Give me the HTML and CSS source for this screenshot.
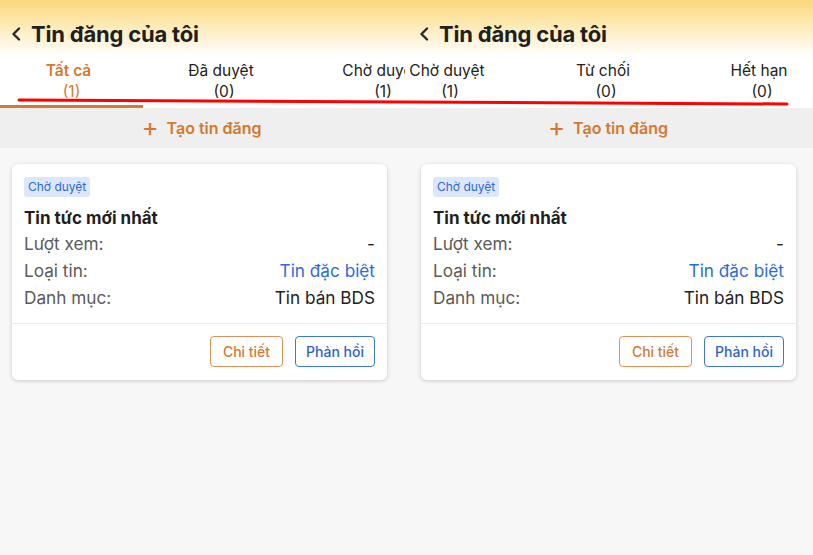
FILE: index.html
```html
<html lang="vi">
<head>
    <meta charset="UTF-8">
    <title>Tin đăng của tôi</title>
    <link rel="stylesheet" href="styles.css">
</head>
<body>
<div class="page">
    <div class="screen screen-left">
        <div class="header">
            <div class="title">
                <svg class="back" width="10" height="14" viewBox="0 0 10 14"><polyline points="8,1.5 2.5,7 8,12.5" fill="none" stroke="#2a2a2a" stroke-width="2.4" stroke-linecap="round" stroke-linejoin="round"/></svg>
                <span>Tin đăng của tôi</span>
            </div>
            <div class="tabs">
                <div class="tab active w1"><div>Tất cả</div><div>(1)</div></div>
                <div class="tab w2"><div>Đã duyệt</div><div>(0)</div></div>
                <div class="tab w3"><div>Chờ duyệt</div><div>(1)</div></div>
                <div class="tab w4"><div>Từ chối</div><div>(0)</div></div>
                <div class="tab w4"><div>Hết hạn</div><div>(0)</div></div>
            </div>
        </div>
        <div class="create"><span class="plus">+</span> Tạo tin đăng</div>
        <div class="list">
            <div class="card">
                <span class="badge">Chờ duyệt</span>
                <div class="card-title">Tin tức mới nhất</div>
                <div class="row"><span>Lượt xem:</span><span class="val">-</span></div>
                <div class="row"><span>Loại tin:</span><span class="val blue">Tin đặc biệt</span></div>
                <div class="row"><span>Danh mục:</span><span class="val">Tin bán BDS</span></div>
                <div class="actions">
                    <button class="btn btn-orange">Chi tiết</button>
                    <button class="btn btn-blue">Phản hồi</button>
                </div>
            </div>
        </div>
    </div>

    <div class="screen screen-right">
        <div class="header">
            <div class="title">
                <svg class="back" width="10" height="14" viewBox="0 0 10 14"><polyline points="8,1.5 2.5,7 8,12.5" fill="none" stroke="#2a2a2a" stroke-width="2.4" stroke-linecap="round" stroke-linejoin="round"/></svg>
                <span>Tin đăng của tôi</span>
            </div>
            <div class="tabs scrolled">
                <div class="tab active w1"><div>Tất cả</div><div>(1)</div></div>
                <div class="tab w2"><div>Đã duyệt</div><div>(0)</div></div>
                <div class="tab w3"><div>Chờ duyệt</div><div>(1)</div></div>
                <div class="tab w4"><div>Từ chối</div><div>(0)</div></div>
                <div class="tab w4"><div>Hết hạn</div><div>(0)</div></div>
            </div>
        </div>
        <div class="create"><span class="plus">+</span> Tạo tin đăng</div>
        <div class="list">
            <div class="card">
                <span class="badge">Chờ duyệt</span>
                <div class="card-title">Tin tức mới nhất</div>
                <div class="row"><span>Lượt xem:</span><span class="val">-</span></div>
                <div class="row"><span>Loại tin:</span><span class="val blue">Tin đặc biệt</span></div>
                <div class="row"><span>Danh mục:</span><span class="val">Tin bán BDS</span></div>
                <div class="actions">
                    <button class="btn btn-orange">Chi tiết</button>
                    <button class="btn btn-blue">Phản hồi</button>
                </div>
            </div>
        </div>
    </div>

    <svg class="mark" width="813" height="555" viewBox="0 0 813 555">
        <line x1="19" y1="100" x2="787" y2="104" stroke="#ff0000" stroke-width="3" stroke-linecap="round"/>
    </svg>
</div>
</body>
</html>
```

FILE: styles.css
```css
* {
    margin: 0;
    padding: 0;
    box-sizing: border-box;
}

body {
    background: #f7f7f7;
    font-family: Inter, "Noto Sans", sans-serif;
    color: #1f1f1f;
}

.page {
    position: relative;
    display: flex;
    width: 813px;
    height: 555px;
    overflow: hidden;
}

.screen {
    overflow: hidden;
    background: #f7f7f7;
}

.screen-left {
    width: 405px;
}

.screen-right {
    width: 408px;
}

.header {
    background: linear-gradient(#fbd77c 0px, #fdebb6 26px, #fffaf0 50px, #fff 56px);
}

.title {
    display: flex;
    align-items: center;
    height: 55px;
    padding: 12px 0 0 11px;
    font-size: 22px;
    font-weight: 700;
    letter-spacing: -0.2px;
}

.screen-right .title {
    padding-left: 14px;
}

.title .back {
    margin-right: 10px;
}

.tabs {
    display: flex;
    height: 53px;
    background: #fff;
}

.tabs.scrolled {
    margin-left: -338px;
}

.tab {
    flex: none;
    padding-top: 5px;
    text-align: center;
    font-size: 15.5px;
    line-height: 21px;
    color: #222;
    border-bottom: 3px solid transparent;
    white-space: nowrap;
}

.tab div:first-child {
    padding-right: 6px;
}

.tab.active {
    color: #d6782d;
    font-weight: 600;
    border-bottom-color: #d6782d;
}

.tab.active div:last-child {
    font-weight: 400;
}

.w1 { width: 143px; }
.w2 { width: 162px; }
.w3 { width: 156px; }
.w4 { width: 156px; }

.create {
    height: 40px;
    background: #efefef;
    display: flex;
    align-items: center;
    justify-content: center;
    color: #d6782d;
    font-size: 16px;
    font-weight: 600;
    padding-right: 2px;
}

.create .plus {
    font-size: 26px;
    font-weight: 400;
    margin-right: 8px;
    margin-top: -3px;
}

.list {
    padding: 16px 18px 0 12px;
}

.screen-right .list {
    padding: 16px 17px 0 16px;
}

.card {
    background: #fff;
    border-radius: 6px;
    box-shadow: 0 1px 4px rgba(0, 0, 0, .18);
    padding: 13px 12px 13px 12px;
}

.badge {
    display: inline-block;
    height: 20px;
    line-height: 20px;
    padding: 0 4px;
    background: #dce7fb;
    color: #2d68dd;
    font-size: 12px;
    border-radius: 3px;
}

.card-title {
    margin-top: 9px;
    font-size: 17px;
    font-weight: 700;
    line-height: 24px;
}

.row {
    display: flex;
    justify-content: space-between;
    font-size: 17.2px;
    line-height: 27px;
    color: #5a5a5a;
}

.row .val {
    color: #222;
}

.row .val.blue {
    color: #2d6ae2;
}

.actions {
    display: flex;
    justify-content: flex-end;
    gap: 12px;
    margin: 12px -12px 0 -12px;
    padding: 12px 12px 0 12px;
    border-top: 1px solid #ececec;
}

.btn {
    height: 31px;
    background: #fff;
    border-radius: 4px;
    font-family: Inter, "Noto Sans", sans-serif;
    font-size: 14px;
    font-weight: 500;
}

.btn-orange {
    width: 73px;
    border: 1px solid #e0915a;
    color: #d6782d;
}

.btn-blue {
    width: 80px;
    border: 1px solid #3d75e0;
    color: #2d62cc;
}

.mark {
    position: absolute;
    left: 0;
    top: 0;
    pointer-events: none;
}
```
